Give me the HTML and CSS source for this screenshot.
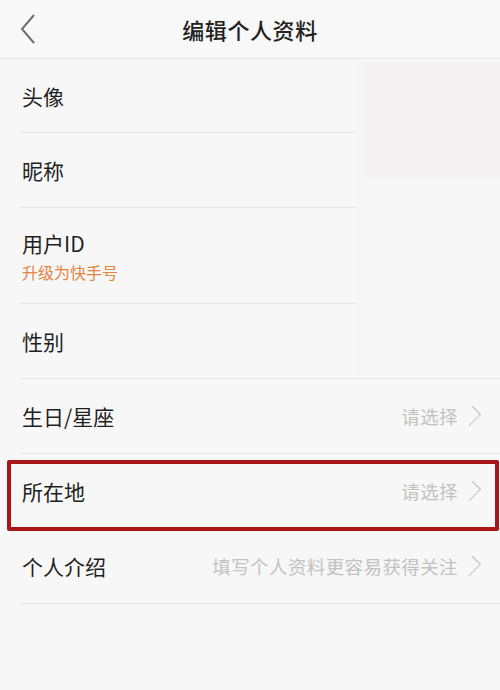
FILE: index.html
```html
<!DOCTYPE html>
<html lang="zh-CN">
<head>
  <meta charset="UTF-8" />
  <meta name="viewport" content="width=device-width, initial-scale=1.0"/>
  <title>编辑个人资料</title>
  <link rel="stylesheet" href="styles.css">
</head>
<body>
  <header class="topbar">
    <span class="back">
      <svg width="16" height="30" viewBox="0 0 16 30"><path d="M14 1 L2 15 L14 29" fill="none" stroke="#6e6e6e" stroke-width="2"/></svg>
    </span>
    <h1 class="title">编辑个人资料</h1>
  </header>

  <main class="list">
    <div class="row first">
      <span class="label">头像</span>
    </div>
    <div class="row">
      <span class="label">昵称</span>
    </div>
    <div class="row tall">
      <div class="stack">
        <span class="label">用户ID</span>
        <span class="sub">升级为快手号</span>
      </div>
    </div>
    <div class="row">
      <span class="label">性别</span>
    </div>
    <div class="row">
      <span class="label">生日/星座</span>
      <span class="value">请选择 <i class="arrow"></i></span>
    </div>
    <div class="row marked">
      <span class="label">所在地</span>
      <span class="value">请选择 <i class="arrow"></i></span>
    </div>
    <div class="row">
      <span class="label">个人介绍</span>
      <span class="value">填写个人资料更容易获得关注 <i class="arrow"></i></span>
    </div>

    <!-- the blurred patch on the right of the first rows -->
    <div class="patch">
      <div class="patch-top"></div>
    </div>
  </main>
</body>
</html>
```

FILE: styles.css
```css
body {
  margin: 0;
  background: #f7f7f7;
  font-family: "Noto Sans CJK SC", "Noto Sans", sans-serif;
  color: #222;
}

.topbar {
  height: 58px;
  background: #f8f8f8;
  border-bottom: 1px solid #e4e4e4;
  display: flex;
  align-items: center;
  justify-content: center;
  position: relative;
}

.back {
  position: absolute;
  left: 20px;
  top: 14px;
}

.title {
  margin: 0;
  font-size: 22px;
  font-weight: 500;
  color: #222;
  letter-spacing: 0.6px;
}

.list {
  position: relative;
  display: flex;
  flex-direction: column;
}

.row {
  height: 75px;
  margin-left: 20px;
  padding-right: 17px;
  box-sizing: border-box;
  display: flex;
  align-items: center;
  justify-content: space-between;
  border-bottom: 1px solid #e6e6e6;
  position: relative;
}

.row.first {
  height: 74px;
}

.row.tall {
  height: 96px;
}

.label {
  font-size: 21px;
  padding-left: 2px;
  color: #1f1f1f;
}

.stack {
  display: flex;
  flex-direction: column;
  gap: 2px;
}

.sub {
  font-size: 16px;
  color: #e3853f;
  padding-left: 2px;
}

.value {
  font-size: 18.5px;
  letter-spacing: 0.4px;
  color: #c2c2c2;
  display: flex;
  align-items: center;
  gap: 7px;
}

.arrow {
  width: 11px;
  height: 11px;
  border-top: 1.5px solid #c6c6c6;
  border-right: 1.5px solid #c6c6c6;
  transform: rotate(45deg) scaleY(1.4);
  margin-right: 6px;
}

/* red frame drawn around the location row */
.row.marked::after {
  content: "";
  position: absolute;
  left: -13px;
  right: 1px;
  top: 6px;
  bottom: -3px;
  border: 4px solid #a8161a;
  border-radius: 2px;
}

.patch {
  position: absolute;
  left: 356px;
  top: 3px;
  width: 144px;
  height: 313px;
  background: #f6f6f6;
}

.patch-top {
  margin: 0 0 0 8px;
  height: 116px;
  background: #f3f1f1;
}
```
